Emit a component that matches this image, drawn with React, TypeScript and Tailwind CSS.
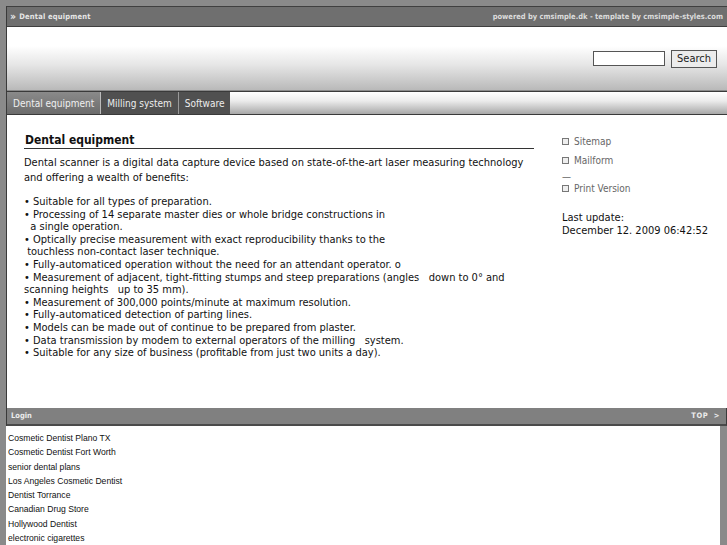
const sans = "font-['DejaVu_Sans_Condensed','DejaVu_Sans',Verdana,sans-serif] font-stretch-condensed";

const nb = "\u00a0";

const bullets: string[][] = [
  ["• Suitable for all types of preparation."],
  ["• Processing of 14 separate master dies or whole bridge constructions in", `${nb} a single operation.`],
  ["• Optically precise measurement with exact reproducibility thanks to the", `${nb}touchless non-contact laser technique.`],
  ["• Fully-automaticed operation without the need for an attendant operator. o"],
  [`• Measurement of adjacent, tight-fitting stumps and steep preparations (angles ${nb}${nb}down to 0° and`, `scanning heights ${nb}${nb}up to 35 mm).`],
  ["• Measurement of 300,000 points/minute at maximum resolution."],
  ["• Fully-automaticed detection of parting lines."],
  ["• Models can be made out of continue to be prepared from plaster."],
  [`• Data transmission by modem to external operators of the milling ${nb}${nb}system.`],
  ["• Suitable for any size of business (profitable from just two units a day)."],
];

const links = [
  "Cosmetic Dentist Plano TX",
  "Cosmetic Dentist Fort Worth",
  "senior dental plans",
  "Los Angeles Cosmetic Dentist",
  "Dentist Torrance",
  "Canadian Drug Store",
  "Hollywood Dentist",
  "electronic cigarettes",
];

function Box() {
  return <span className="inline-block w-[7px] h-[7px] border border-[#777] bg-[#eee] mr-[5px] align-[0px]" />;
}

export default function App() {
  return (
    <div className={`min-h-[545px] bg-[#8a8a8a] pt-[6px] ${sans}`}>
      <div className="ml-[6px] w-[721px] border-l border-[#3a3a3a]">
        {/* top strip */}
        <div className="h-[21px] border-t border-b border-[#3f3f3f] bg-[#6f6f6f] flex items-center justify-between px-[3px] text-[7.5px] font-bold text-[#e6e6e6]">
          <span className="flex items-center gap-[5px] tracking-[0.2px]">
            <span className="text-[11px] leading-none tracking-[-2px] pb-[1px]">››</span>
            <span>Dental equipment</span>
          </span>
          <span className="pr-[1px] text-[#dcdcdc]">powered by cmsimple.dk - template by cmsimple-styles.com</span>
        </div>

        {/* header */}
        <div className="h-[63px] bg-[linear-gradient(to_bottom,#ffffff_0%,#ffffff_30%,#e6e6e6_60%,#b9b9b9_100%)] flex items-center justify-end pr-[10px] gap-[6px]">
          <input className="w-[72px] h-[15px] border border-[#555] bg-white" />
          <button className="h-[18px] px-[5px] border border-[#555] bg-[#ececec] text-[11px] text-[#222] leading-none">Search</button>
        </div>

        {/* nav */}
        <div className="h-[24px] mt-px border-t border-b border-[#3a3a3a] flex bg-[linear-gradient(to_bottom,#ffffff_0%,#ececec_40%,#a8a8a8_100%)]">
          <div className="px-[6px] flex items-center bg-[linear-gradient(to_bottom,#8a8a8a,#6c6c6c)] text-[10px] text-[#f0f0f0] border-r border-[#bbb]">Dental equipment</div>
          <div className="px-[6px] flex items-center bg-[#505050] text-[10px] text-[#ededed] border-r border-[#999]">Milling system</div>
          <div className="px-[6px] flex items-center bg-[#505050] text-[10px] text-[#ededed]">Software</div>
        </div>

        {/* content */}
        <div className="h-[293px] bg-white flex text-[11px] text-[#111]">
          <div className="w-[510px] ml-[17px] pt-[18px]">
            <h1 className="text-[12px] font-bold pl-[1px] pb-[1px] border-b border-[#333] leading-[14px]">Dental equipment</h1>
            <p className="mt-[6px] leading-[15px]">
              Dental scanner is a digital data capture device based on state-of-the-art laser measuring technology
              <br />
              and offering a wealth of benefits:
            </p>
            <div className="mt-[11px] leading-[12.6px]">
              {bullets.map((b, i) =>
                b.map((line, j) => <div key={`${i}-${j}`} className="whitespace-pre">{line}</div>)
              )}
            </div>
          </div>
          <div className="ml-[28px] pt-[21px] text-[10px] text-[#666]">
            <div className="leading-[12px]"><Box />Sitemap</div>
            <div className="mt-[7px] leading-[12px]"><Box />Mailform</div>
            <div className="mt-[6px] leading-[8px]">—</div>
            <div className="mt-[2px] leading-[12px]"><Box />Print Version</div>
            <div className="mt-[16px] text-[11px] text-[#111] leading-[13px]">
              Last update:
              <br />
              December 12. 2009 06:42:52
            </div>
          </div>
        </div>

        {/* footer bar */}
        <div className="h-[18px] bg-[#808080] border-b-2 border-[#4a4a4a] border-r border-r-[#3a3a3a] flex items-center justify-between px-[4px] text-[7.5px] font-bold text-[#ececec]">
          <span>Login</span>
          <span className="pr-[2px] tracking-[0.5px]">TOP {nb}&gt;</span>
        </div>
      </div>

      {/* link list */}
      <div className="ml-[6px] w-[714px] bg-white pt-[5px] pl-[2px] text-[8.6px] text-[#111] font-['Liberation_Sans',Arial,sans-serif] font-stretch-normal">
        {links.map((l) => (
          <div key={l} className="h-[14.3px] leading-[14.3px]">{l}</div>
        ))}
      </div>
    </div>
  );
}
